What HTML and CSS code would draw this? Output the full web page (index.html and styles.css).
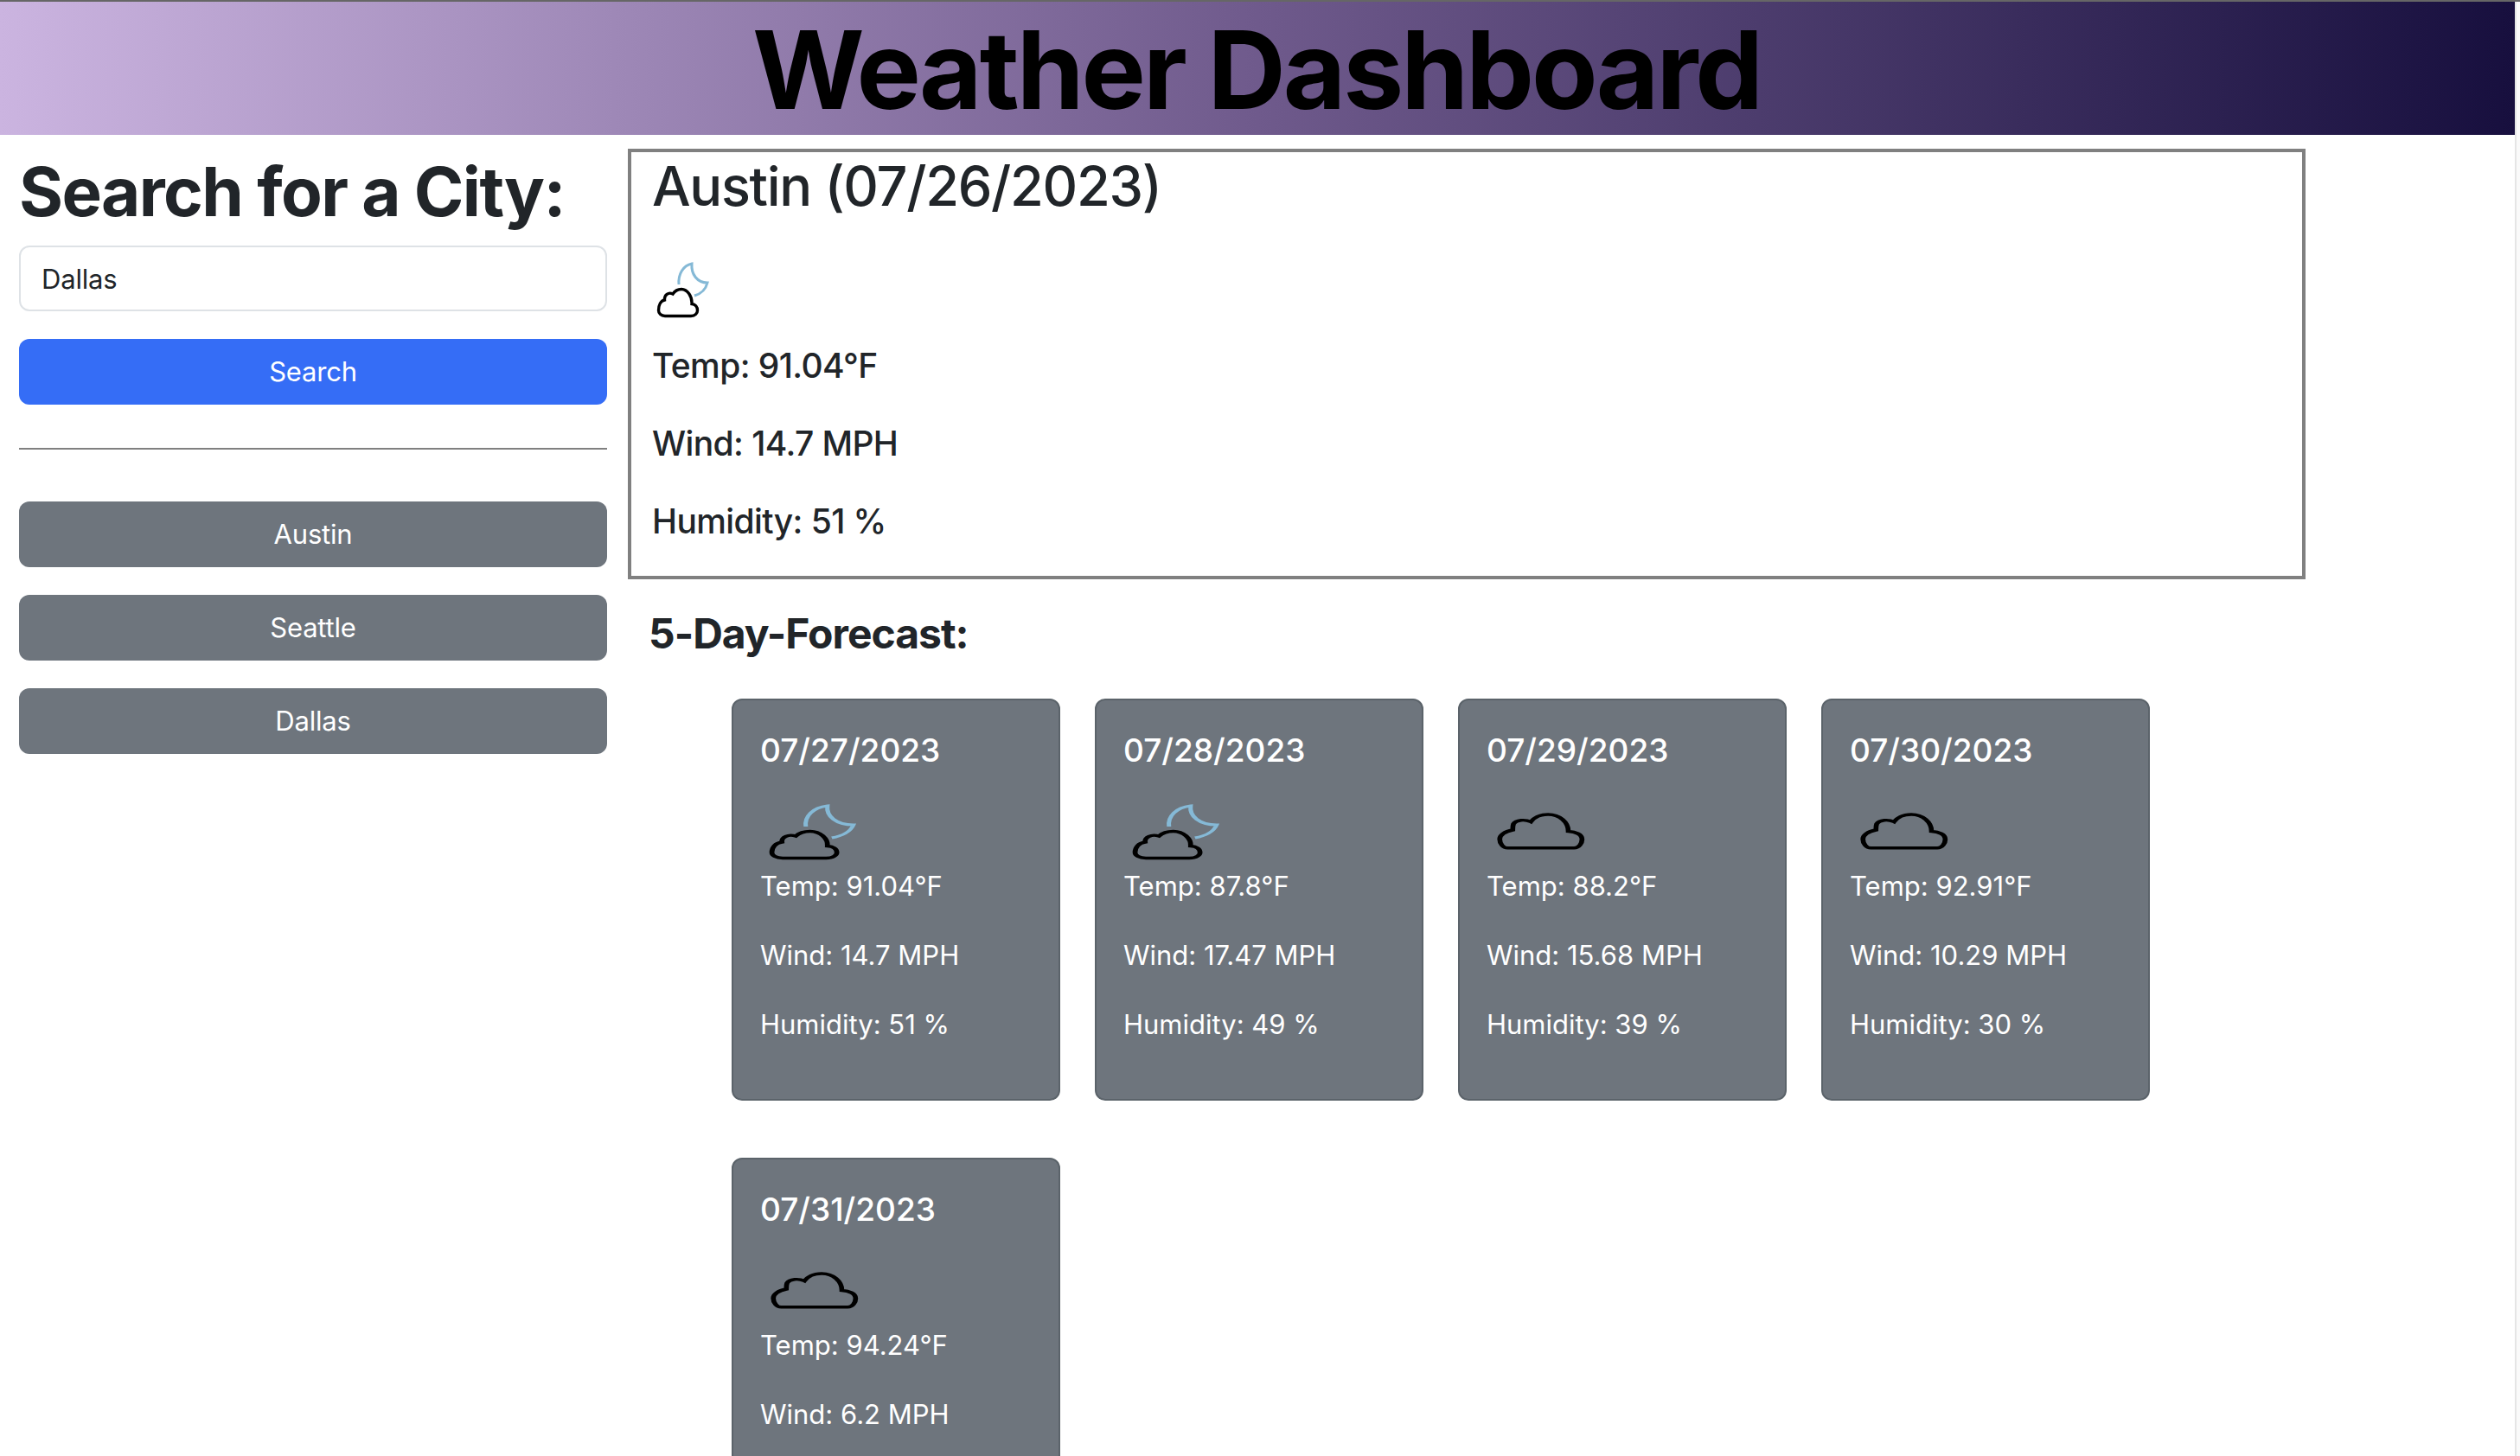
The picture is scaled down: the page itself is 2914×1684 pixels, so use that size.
FILE: index.html
```html
<!DOCTYPE html>
<html lang="en">
<head>
<meta charset="utf-8">
<title>Weather Dashboard</title>
<link rel="stylesheet" href="styles.css">
</head>
<body>
<svg class="defs" width="0" height="0" aria-hidden="true">
  <defs>
    <path id="cloud" d="M15 68.5H45C50 68.5 52.5 65 52.5 62C52.5 58 50 55 46 54.5C46.5 46 41 37.5 34 37.5C29 37.5 26 40 24 43C19 40.5 14 44 14.5 50C10 51 7.5 56 7.5 62C7.5 65.5 10.5 68.5 15 68.5Z"/>
    <path id="moon" d="M31 32C30 20 36 10 46 8C45 20 52 30 64 30C62 38 56 43 49 45"/>
    <path id="cloud-large" d="M14 56.8H60C63.5 56.8 65.5 51 65.5 46.7C65.5 41 61 38 56 37.5C56 27 50 18 42 18C36 18 32 22 30 26.5C26 23.5 20 24 18 29C17.5 31 17.5 34 17.5 36C12 37.5 8.5 42 8.5 46.5C8.5 52 11 56.8 14 56.8Z"/>
  </defs>
</svg>
<div class="page">
  <header class="banner"><h1 class="banner-title">Weather Dashboard</h1></header>
  <div class="layout">
    <aside class="sidebar">
      <h2 class="search-title">Search for a City:</h2>
      <input class="city-input" type="text" value="Dallas">
      <button class="btn btn-primary">Search</button>
      <hr class="divider">
      <div class="history">
        <button class="btn btn-secondary">Austin</button>
        <button class="btn btn-secondary">Seattle</button>
        <button class="btn btn-secondary">Dallas</button>
      </div>
    </aside>
    <main class="content">
      <section class="today">
        <h2 class="today-title">Austin (07/26/2023)</h2>
        <svg class="icon icon-today" viewBox="0 0 100 100" preserveAspectRatio="none"><use href="#moon" class="moon"/><use href="#cloud" class="cloud"/></svg>
        <p class="today-line">Temp: 91.04°F</p>
        <p class="today-line">Wind: 14.7 MPH</p>
        <p class="today-line">Humidity: 51 %</p>
      </section>
      <h3 class="forecast-title">5-Day-Forecast:</h3>
      <div class="cards">
        <article class="card">
          <h4 class="card-date">07/27/2023</h4>
          <svg class="icon icon-card" viewBox="0 0 100 100" preserveAspectRatio="none"><use href="#moon" class="moon"/><use href="#cloud" class="cloud"/></svg>
          <p class="card-line">Temp: 91.04°F</p>
          <p class="card-line">Wind: 14.7 MPH</p>
          <p class="card-line">Humidity: 51 %</p>
        </article>
        <article class="card">
          <h4 class="card-date">07/28/2023</h4>
          <svg class="icon icon-card" viewBox="0 0 100 100" preserveAspectRatio="none"><use href="#moon" class="moon"/><use href="#cloud" class="cloud"/></svg>
          <p class="card-line">Temp: 87.8°F</p>
          <p class="card-line">Wind: 17.47 MPH</p>
          <p class="card-line">Humidity: 49 %</p>
        </article>
        <article class="card">
          <h4 class="card-date">07/29/2023</h4>
          <svg class="icon icon-card" viewBox="0 0 100 100" preserveAspectRatio="none"><use href="#cloud-large" class="cloud"/></svg>
          <p class="card-line">Temp: 88.2°F</p>
          <p class="card-line">Wind: 15.68 MPH</p>
          <p class="card-line">Humidity: 39 %</p>
        </article>
        <article class="card">
          <h4 class="card-date">07/30/2023</h4>
          <svg class="icon icon-card" viewBox="0 0 100 100" preserveAspectRatio="none"><use href="#cloud-large" class="cloud"/></svg>
          <p class="card-line">Temp: 92.91°F</p>
          <p class="card-line">Wind: 10.29 MPH</p>
          <p class="card-line">Humidity: 30 %</p>
        </article>
        <article class="card">
          <h4 class="card-date">07/31/2023</h4>
          <svg class="icon icon-card" viewBox="0 0 100 100" preserveAspectRatio="none"><use href="#cloud-large" class="cloud"/></svg>
          <p class="card-line">Temp: 94.24°F</p>
          <p class="card-line">Wind: 6.2 MPH</p>
        </article>
      </div>
    </main>
  </div>
</div>
<div class="scrollbar"></div>
</body>
</html>
```
FILE: styles.css
```css
* { box-sizing: border-box; }
html, body { height: 100%; margin: 0; overflow: hidden; }
body {
  display: flex;
  background: #fff;
  color: #212529;
  font-family: Inter, "Liberation Sans", sans-serif;
  border-top: 2px solid #666;
}
.defs { position: absolute; }
.page { flex: 1; min-width: 0; }
.scrollbar { width: 6px; background: #fafafa; border-left: 2px solid #e5e5e5; }

.banner {
  height: 154px;
  padding-top: 3px;
  padding-right: 2px;
  display: flex;
  justify-content: center;
  align-items: center;
  background: linear-gradient(to right, #cbb4e0, #6f5a8c 50%, #170f3e);
}
.banner-title { margin: 0; font-size: 125px; line-height: 1; font-weight: 700; color: #000; letter-spacing: -3px; }

.layout { display: flex; align-items: flex-start; padding: 16px 0 0 22px; }
.sidebar { width: 680px; flex: none; margin-right: 24px; }
.search-title { margin: 2px 0 14px; font-size: 78px; line-height: 96px; font-weight: 700; letter-spacing: -1.6px; }
.city-input {
  display: block;
  width: 100%;
  height: 76px;
  padding: 0 24px;
  border: 2px solid #dee2e6;
  border-radius: 12px;
  font: 31px Inter, "Liberation Sans", sans-serif;
  letter-spacing: -0.2px;
  color: #212529;
}
.btn {
  display: block;
  width: 100%;
  height: 76px;
  padding-bottom: 2px;
  border: 0;
  border-radius: 12px;
  color: #fff;
  font: 31px Inter, "Liberation Sans", sans-serif;
  letter-spacing: -0.2px;
}
.btn-primary { margin-top: 32px; background: #356df6; }
.btn-secondary { background: #6e757d; }
.divider { margin: 50px 0 60px; border: 0; border-top: 2px solid #808080; }
.history { display: flex; flex-direction: column; gap: 32px; }

.content { width: 1940px; flex: none; }
.today { height: 498px; border: 4px solid #808080; padding: 0 24px; }
.today-title { margin: 1px 0 0; font-size: 63px; line-height: 77px; font-weight: 500; letter-spacing: -1.3px; }
.icon { display: block; overflow: visible; }
.icon-today { width: 100px; height: 100px; margin-top: 43px; margin-bottom: 5px; }
.today-line { margin: 0 0 48px; font-size: 39px; line-height: 42px; font-weight: 450; letter-spacing: -0.6px; }
.moon { fill: none; stroke: #85b9d6; stroke-width: 3; }
.cloud { fill: none; stroke: #000; stroke-width: 3.4; }

.forecast-title { margin: 34px 0 0 24px; font-size: 48px; line-height: 58px; font-weight: 700; letter-spacing: -1px; }
.cards { display: flex; flex-wrap: wrap; column-gap: 40px; row-gap: 66px; margin: 46px 0 0 120px; width: 1700px; }
.card {
  width: 380px;
  height: 465px;
  padding: 34px 32px 32px 31px;
  border: 2px solid #5b636a;
  border-radius: 12px;
  background: #6e757d;
  color: #fff;
}
.card-date { margin: 0; font-size: 37px; line-height: 48px; font-weight: 500; }
.icon-card { width: 167px; height: 100px; margin-top: 32px; margin-left: 1px; }
.card-line { margin: 0 0 48px; font-size: 31px; line-height: 32px; }
.icon-card + .card-line { margin-top: -15px; }
```
